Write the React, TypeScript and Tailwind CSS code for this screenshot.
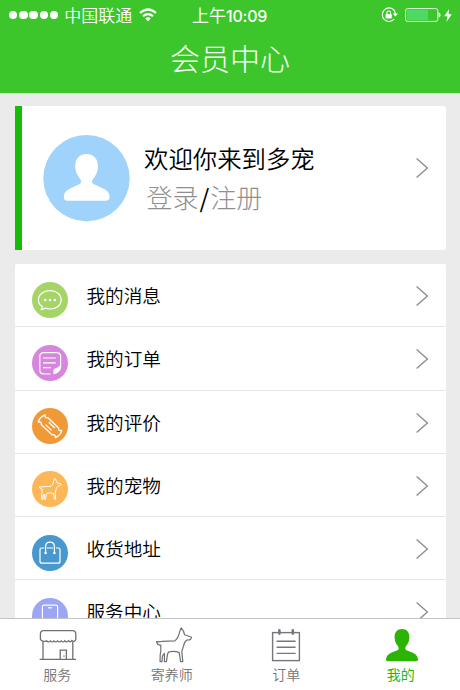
import React, { useState } from 'react';

interface IconProps {
  className?: string;
}

function Chevron({ className = '' }: IconProps) {
  return (
    <svg width="14" height="22" viewBox="0 0 14 22" fill="none" stroke="#8e8e8e" strokeWidth="1.4" className={className}>
      <path d="M1.6 1.4 L12.4 11 L1.6 20.6" />
    </svg>
  );
}

function StatusBar() {
  return (
    <div className="flex h-[30px] items-center pl-[9px] pr-[7px] text-white">
      <div className="flex w-[183px] items-center">
        <div className="flex gap-[1.8px]">
          {[0, 1, 2, 3, 4].map((i) => (
            <span key={i} className="h-[8.4px] w-[8.4px] rounded-full bg-white" />
          ))}
        </div>
        <span className="ml-[6px] whitespace-nowrap text-[17px] leading-[30px] font-[350]">中国联通</span>
        <svg width="18" height="14" viewBox="0 0 18 14" fill="none" stroke="white" strokeWidth="2.2" className="ml-[7px]">
          <path d="M1 5 Q9 -2 17 5" />
          <path d="M4 8.2 Q9 4 14 8.2" />
          <path d="M6.2 10.2 Q9 8.2 11.8 10.2 L9 13.4 Z" fill="white" stroke="none" />
        </svg>
      </div>
      <span className="whitespace-nowrap text-[17px] leading-[30px]">
        上午<span className="font-['Inter'] text-[16px] font-medium tracking-[-0.2px]">10:09</span>
      </span>
      <div className="ml-auto flex items-center">
        <svg width="18" height="16" viewBox="0 0 18 16" fill="none" stroke="white" strokeWidth="1.1">
          <path d="M13.2 3.2 A6.8 6.8 0 1 0 13.2 12.2" />
          <path d="M12 2.2 A6.8 6.8 0 0 1 14.4 7" />
          <path d="M11.8 6.4 H17 L14.4 9.6 Z" fill="white" stroke="none" />
          <rect x="4.6" y="7" width="6.2" height="4.4" rx="0.6" fill="white" stroke="none" />
          <path d="M5.9 7.2 V5.8 A1.8 1.8 0 0 1 9.5 5.8 V7.2" />
        </svg>
        <svg width="36" height="14" viewBox="0 0 36 14" className="ml-[6px]">
          <rect x="0.6" y="0.6" width="32.2" height="12.8" rx="2" fill="none" stroke="white" strokeOpacity="0.85" />
          <rect x="2" y="2" width="21" height="10" fill="#4cd964" />
          <path d="M33.6 4.6 H34 Q35.6 5.4 35.6 7 Q35.6 8.6 34 9.4 H33.6 Z" fill="white" />
        </svg>
        <svg width="8" height="13" viewBox="0 0 8 13" className="ml-[3px] mr-[1px]">
          <path d="M5.2 0 L0.2 7.2 H3.4 L2.4 13 L7.8 5.2 H4.6 Z" fill="white" />
        </svg>
      </div>
    </div>
  );
}

function Avatar() {
  return (
    <svg width="87" height="87" viewBox="0 0 87 87" className="shrink-0">
      <circle cx="43.5" cy="43.2" r="43.2" fill="#9fd3fb" />
      <path
        fill="white"
        d="M43.5 19 C50.8 19 55 24.3 55 31.3 C55 36.5 53.2 40 51.2 42.4 C48.8 45.2 48 47.6 50.6 48.9 L61 54 C65 56 66.6 58.6 66.6 62 C66.6 64.6 65.4 65.8 62.6 65.8 H24.4 C21.8 65.8 20.8 64.4 20.8 62 C20.8 58.6 22.4 56 26.4 54 L36.6 48.9 C39 47.6 38.4 45.2 36 42.4 C34 40 32.2 36.5 32.2 31.3 C32.2 24.3 36.2 19 43.5 19 Z"
      />
    </svg>
  );
}

function DogPath() {
  return (
    <path d="M0.8 14.6 C2.4 15.2 4 14.4 6 14.4 L19 13.8 C21.6 11.8 22.8 9.4 23.6 5.6 L25.4 0.8 C27.4 2.8 28.4 5.2 28.8 7.8 L35.8 10.2 C35.2 12.6 34 13.4 31.6 12.8 C29.2 14 28.4 16 27.8 18.6 L26 24.6 L27 34.6 H24.8 L23.4 25.6 C20.4 24.2 16 24.2 12.8 25 C10.6 27.4 11.6 31.2 10.6 34.6 H8.6 L8.6 26.4 L6.6 29 L6.2 34.6 H4.2 C4.6 30.4 3.8 28 5 24.4 V18.2 C2.6 18 1 16.8 0.8 14.6 Z" />
  );
}

const menuItems = [
  {
    label: '我的消息',
    color: '#a5d567',
    icon: (
      <>
        <path d="M10.4 24.8 C7.8 23 6.4 20.6 6.4 18 C6.4 12.6 11.6 8.7 18 8.7 C24.4 8.7 29.2 12.6 29.2 18 C29.2 23.2 24.4 27 18 27 C16.2 27 14.6 26.6 13.2 26.2 C12 27 10.4 27.6 9 27.6 C9.8 26.8 10.4 25.8 10.4 24.8 Z" />
        <g fill="white" stroke="none">
          <circle cx="13.2" cy="18" r="1.3" />
          <circle cx="18" cy="18" r="1.3" />
          <circle cx="22.8" cy="18" r="1.3" />
        </g>
      </>
    ),
  },
  {
    label: '我的订单',
    color: '#d687dd',
    icon: (
      <>
        <path d="M18.6 29 H11.8 Q7.8 29 7.8 25 V11.6 Q7.8 7.6 11.8 7.6 H24.6 Q28.6 7.6 28.6 11.6 V20.6" />
        <path d="M11 13 H23.8 M11 17.8 H23.8 M11 22.6 H19" />
        <path d="M22 28.6 V25.8 Q22 24.4 23.4 24 Q26.6 23.2 28.6 21 Q28.8 26.6 22 28.6 Z" fill="white" />
      </>
    ),
  },
  {
    label: '我的评价',
    color: '#f09a37',
    icon: (
      <>
        <path d="M13.2 6.8 Q12.2 10.2 16 9.8 L26.6 20 Q26.4 23.6 29.8 22.4 Q28.8 27.4 23.4 29.6 Q23.6 26.2 20 26.8 L9.4 16.8 Q9.6 13.2 6.2 14.2 Q7.4 9 13.2 6.8 Z" strokeWidth="1.3" />
        <path d="M16.8 14.2 L22.8 20 M13.6 16.6 L19.6 22.4" strokeWidth="1.3" />
      </>
    ),
  },
  {
    label: '我的宠物',
    color: '#fdb756',
    icon: (
      <g transform="translate(7 6.8) scale(0.62)" strokeWidth="1.6">
        <DogPath />
      </g>
    ),
  },
  {
    label: '收货地址',
    color: '#4998cd',
    icon: (
      <>
        <path d="M12.4 13 H9.6 Q8 13 8 14.6 V26.2 Q8 28.2 10 28.2 H26 Q28 28.2 28 26.2 V14.6 Q28 13 26.4 13 H23.8 M14.8 13 H21.2" />
        <path d="M13.6 18 V11.6 Q13.6 7.2 18 7.2 Q22.4 7.2 22.4 11.6 V18" />
        <g fill="white" stroke="none">
          <circle cx="13.6" cy="18" r="1.3" />
          <circle cx="22.4" cy="18" r="1.3" />
        </g>
      </>
    ),
  },
  {
    label: '服务中心',
    color: '#9ba6f5',
    icon: (
      <>
        <rect x="10.4" y="7.2" width="15.2" height="22" rx="1.6" />
        <path d="M16 9.8 H20" />
      </>
    ),
  },
];

const tabs = [
  {
    label: '服务',
    icon: (
      <svg width="38" height="36" viewBox="0 0 38 36" fill="none" stroke="#6f7170" strokeWidth="1.3" className="ml-[2px]">
        <path d="M4.4 1.6 H33.6 Q36.6 1.6 36.8 5 V10.4 Q35.4 13.8 32.8 11.6 Q31.4 13.8 29.4 11.8 Q27.6 14 25.6 11.8 Q24 14 22.2 11.8 Q20.4 14 18.6 11.8 Q16.8 14 15 11.8 Q13.2 14 11.4 11.8 Q9.6 14 7.6 11.8 Q3.4 13.6 1.4 10.4 V5 Q1.6 1.6 4.4 1.6 Z" />
        <path d="M4 12.6 V30.2 M33.8 12.6 V30.2 M0.6 30.4 H37" />
        <path d="M21.2 30 V21.2 H27.4 V30 M25 26.4 V27.8" />
      </svg>
    ),
  },
  {
    label: '寄养师',
    icon: (
      <svg width="38" height="36" viewBox="0 0 38 36" fill="none" stroke="#6f7170" strokeWidth="1.2" strokeLinejoin="round" className="overflow-visible">
        <g transform="translate(2.8 -2)">
          <DogPath />
        </g>
      </svg>
    ),
  },
  {
    label: '订单',
    icon: (
      <svg width="30" height="36" viewBox="0 0 30 36" fill="none" stroke="#74777c" strokeWidth="1.4">
        <rect x="1.6" y="3.6" width="26.8" height="28" />
        <path d="M5.6 12.2 H24.6 M5.6 18.2 H24.6 M5.6 24.4 H24.6" />
        <path d="M8.4 1.4 V4.6 M21.8 1.4 V4.6" strokeWidth="2.6" strokeLinecap="round" />
      </svg>
    ),
  },
  {
    label: '我的',
    icon: (
      <svg width="34" height="36" viewBox="0 0 34 36" className="ml-[2px]">
        <path
          fill="#2bb404"
          d="M17 0 C21.8 0 24.4 3.4 24.4 8 C24.4 12.6 22.8 15 21 17.2 C19.6 19.4 20.2 20.8 22 21.4 C27.6 23.4 32.6 25 33 30.4 Q33 32.2 31.2 32.2 H2.8 Q1 32.2 1 30.4 C1.4 25 6.4 23.4 12 21.4 C13.8 20.8 14.4 19.4 13 17.2 C11.2 15 9.6 12.6 9.6 8 C9.6 3.4 12.2 0 17 0 Z"
        />
      </svg>
    ),
  },
];

export default function App() {
  const [activeTab, setActiveTab] = useState('我的');

  return (
    <div className="flex h-[690px] w-[460px] flex-col overflow-hidden bg-[#ebebeb] font-['Noto_Sans_CJK_SC',sans-serif]">
      <header className="h-[92.5px] shrink-0 bg-[#3cc62b]">
        <StatusBar />
        <h1 className="mt-[7px] text-center text-[30px] leading-[40px] font-light text-white">会员中心</h1>
      </header>

      <main className="min-h-0 flex-1 overflow-hidden px-[14.5px] pt-[13.5px]">
        <section className="flex h-[144px] items-center rounded-r-[3px] border-l-[7.5px] border-[#17bc09] bg-white pl-[21px] pr-[17px]">
          <Avatar />
          <div className="ml-[14.5px] flex-1 whitespace-nowrap">
            <p className="-mt-[1px] text-[24.4px] leading-[38px] font-[350] text-black">欢迎你来到多宠</p>
            <p className="pl-[2.5px] text-[26px] leading-[40px] font-light text-[#8f8f8f]">
              登录<span className="mx-[1px] text-[25px] font-normal text-black">/</span>注册
            </p>
          </div>
          <Chevron className="relative -top-[10px]" />
        </section>

        <ul className="mt-[14px] rounded-[2px] bg-white">
          {menuItems.map((item) => (
            <li key={item.label} className="flex h-[63.25px] items-center border-b-[1.5px] border-[#e6e6e6] pl-[17px] pr-[17px]">
              <svg width="36" height="36" viewBox="0 0 36 36" fill="none" stroke="white" strokeWidth="1.2" strokeLinejoin="round" className="mt-[9px]">
                <circle cx="18" cy="18" r="18" fill={item.color} stroke="none" />
                {item.icon}
              </svg>
              <span className="ml-[19px] flex-1 text-[18.6px] leading-[30px] font-[350] text-black">{item.label}</span>
              <Chevron className="mt-[2px]" />
            </li>
          ))}
        </ul>
      </main>

      <nav className="flex h-[72px] shrink-0 border-t border-[#c4c4c4] bg-white pr-[2px]">
        {tabs.map((tab) => (
          <button
            key={tab.label}
            onClick={() => setActiveTab(tab.label)}
            className="flex flex-1 flex-col items-center pt-[10px]"
          >
            {tab.icon}
            <span
              className={
                tab.label === activeTab
                  ? '-mt-[1px] text-[14px] leading-[20px] text-[#2bb404]'
                  : '-mt-[1px] text-[14px] leading-[20px] font-[350] text-[#757575]'
              }
            >
              {tab.label}
            </span>
          </button>
        ))}
      </nav>
    </div>
  );
}
